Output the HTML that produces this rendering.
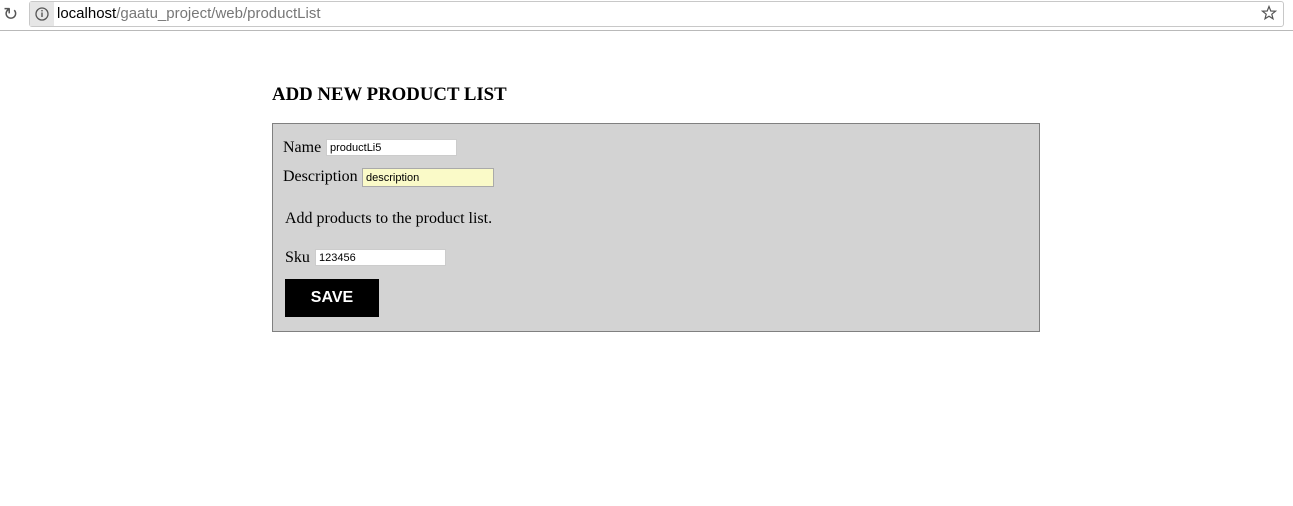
<!DOCTYPE html>
<html><head><style>
body{margin:0;width:1293px;height:506px;background:#fff;position:relative;overflow:hidden;font-family:"Liberation Serif",serif;}
.a{position:absolute;}
.bar{left:0;top:0;width:1293px;height:30px;background:#fff;border-bottom:1px solid #b9b9b9;}
.url{left:29px;top:1px;width:1253px;height:24px;border:1px solid #c8c8c8;border-radius:3px;background:#fff;}
.url .t{position:absolute;left:27px;top:3px;font:15px "Liberation Sans",sans-serif;color:#777;}
.info{position:absolute;left:0;top:0;width:24px;height:24px;background:#e6e6e6;}
input{position:absolute;border:1px solid #ccc;font:11px "Liberation Sans",sans-serif;padding:0 3px;height:17px;box-sizing:border-box;background:#fff;}
.lbl{font-size:16px;color:#000;}
</style></head><body>
<div class="a bar"></div>
<div class="a" style="left:3px;top:4px;font:18px 'DejaVu Sans',sans-serif;color:#555;">&#x21bb;</div>
<div class="a url"><div class="info"><svg width="24" height="24"><circle cx="12" cy="12" r="6" fill="none" stroke="#555" stroke-width="1.3"/><rect x="11.3" y="10.5" width="1.4" height="4.5" fill="#555"/><rect x="11.3" y="8" width="1.4" height="1.4" fill="#555"/></svg></div><span class="t"><span style="color:#000">localhost</span>/gaatu_project/web/productList</span></div>
<svg class="a" style="left:1261px;top:5px" width="16" height="16"><path d="M8 1.5 L9.8 6 L14.5 6.2 L10.8 9.2 L12 13.8 L8 11.2 L4 13.8 L5.2 9.2 L1.5 6.2 L6.2 6 Z" fill="none" stroke="#555" stroke-width="1.2"/></svg>
<div class="a" style="left:272px;top:84px;font-size:18.8px;font-weight:bold;">ADD NEW PRODUCT LIST</div>
<div class="a" style="left:272px;top:123px;width:766px;height:207px;background:#d3d3d3;border:1px solid #808080;"></div>
<div class="a lbl" style="left:283px;top:139px;">Name</div>
<input style="left:326px;top:139px;width:131px;" value="productLi5">
<div class="a lbl" style="left:283px;top:168px;">Description</div>
<input style="left:362px;top:168px;width:132px;height:19px;background:#fafac8;border:1px solid #aaa;" value="description">
<div class="a lbl" style="left:285px;top:210px;">Add products to the product list.</div>
<div class="a lbl" style="left:285px;top:249px;">Sku</div>
<input style="left:315px;top:249px;width:131px;" value="123456">
<div class="a" style="left:285px;top:279px;width:94px;height:38px;background:#000;color:#fff;font:bold 16px 'Liberation Sans',sans-serif;text-align:center;line-height:38px;">SAVE</div>
</body></html>
